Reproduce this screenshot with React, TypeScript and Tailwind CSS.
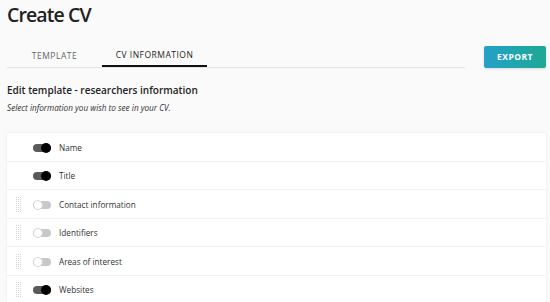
import { useState } from 'react';

const items = [
  { name: 'Name', on: true, drag: false },
  { name: 'Title', on: true, drag: false },
  { name: 'Contact information', on: false, drag: true },
  { name: 'Identifiers', on: false, drag: true },
  { name: 'Areas of interest', on: false, drag: true },
  { name: 'Websites', on: true, drag: true },
];

function DragHandle() {
  const dots = [];
  for (let r = 0; r < 8; r++) {
    for (let c = 0; c < 3; c++) {
      dots.push(<rect key={`${r}-${c}`} x={c * 2} y={r * 2} width="1" height="1" fill="#d4d4d4" />);
    }
  }
  return (
    <svg width="6" height="16" viewBox="0 0 6 16">
      {dots}
    </svg>
  );
}

function Toggle({ on, onClick }: { on: boolean; onClick: () => void }) {
  return (
    <button onClick={onClick} className="relative w-[18px] h-[10px] flex items-center">
      <span className={`block w-[18px] h-[8px] rounded-full ${on ? 'bg-[#5a5a5a]' : 'bg-[#c8c8c8]'}`} />
      <span
        className={`absolute top-0 w-[10px] h-[10px] rounded-full ${
          on ? 'right-0 bg-black' : 'left-0 bg-white border border-[#d6d6d6]'
        }`}
      />
    </button>
  );
}

export default function App() {
  const [state, setState] = useState(items.map((i) => i.on));
  const [tab, setTab] = useState(1);

  return (
    <div className="w-[550px] h-[302px] overflow-hidden bg-[#fafafa] text-[#222] font-['Open_Sans',sans-serif]">
      <div className="pl-[7px] pr-[4px]">
        <h1 className="text-[19.5px] font-semibold leading-none pt-[5px] h-[30px] tracking-[-0.9px]">Create CV</h1>

        <div className="flex items-end justify-between mt-[15px]">
          <div className="flex w-[458px] border-b border-[#e4e4e4]">
            {['TEMPLATE', 'CV INFORMATION'].map((t, i) => (
              <button
                key={t}
                onClick={() => setTab(i)}
                className={`h-[22px] text-[8.5px] tracking-[0.5px] ${
                  i === 0 ? 'w-[95px]' : 'w-[105px]'
                } ${tab === i ? 'text-[#222] border-b-2 border-[#111] -mb-px' : 'text-[#666]'}`}
              >
                {t}
              </button>
            ))}
          </div>
          <button className="w-[62px] h-[22px] rounded-[2px] bg-gradient-to-r from-[#25a0c9] to-[#1fa894] text-white text-[8.5px] font-bold tracking-[0.5px] shadow-sm">
            EXPORT
          </button>
        </div>

        <h2 className="text-[10px] font-semibold mt-[15px] leading-[14px]">Edit template - researchers information</h2>
        <p className="text-[8.2px] italic text-[#333] mt-[5px] leading-[11px]">Select information you wish to see in your CV.</p>

        <div className="mt-[20px] bg-white rounded-[3px] shadow-[0_0_3px_rgba(0,0,0,0.08)]">
          {items.map((item, i) => (
            <div key={item.name} className="h-[28.5px] pt-[2px] flex items-center border-b border-[#f2f2f2]">
              <div className="w-[26px] pl-[9px]">{item.drag && <DragHandle />}</div>
              <Toggle on={state[i]} onClick={() => setState(state.map((s, j) => (j === i ? !s : s)))} />
              <span className="ml-[8px] text-[8.2px] text-[#333]">{item.name}</span>
            </div>
          ))}
        </div>
      </div>
    </div>
  );
}
